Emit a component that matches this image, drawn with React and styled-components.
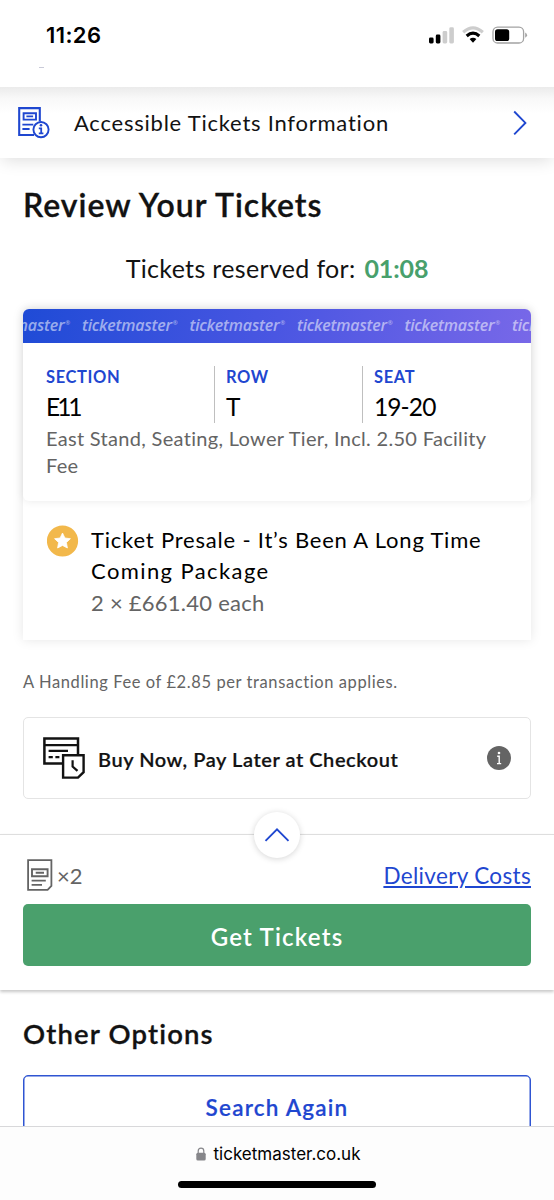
import React from 'react';
import styled, { createGlobalStyle } from 'styled-components';

const BRAND_COUNT = 6;

const App = () => {
  return (
    <>
      <GlobalStyle />
      <Screen>
        <StatusBar>
          <Time>11:26</Time>
          <StatusIcons />
          <Remnant />
        </StatusBar>

        <InfoLink>
          <TicketInfoIcon />
          <Text $size={22} $spacing={0.77}>
            Accessible Tickets Information
          </Text>
          <ChevronRight />
        </InfoLink>

        <Review>
          <Title>Review Your Tickets</Title>
          <Reserved>
            Tickets reserved for: <strong>01:08</strong>
          </Reserved>

          <Card>
            <Ticket>
              <Banner>
                {Array.from({ length: BRAND_COUNT }, (_, i) => (
                  <Brand key={i}>
                    ticketmaster<sup>®</sup>
                  </Brand>
                ))}
              </Banner>
              <TicketBody>
                <Seats>
                  <Seat>
                    <Label>SECTION</Label>
                    <Value $spacing={-3}>E11</Value>
                  </Seat>
                  <Seat $divided>
                    <Label>ROW</Label>
                    <Value>T</Value>
                  </Seat>
                  <Seat $divided>
                    <Label>SEAT</Label>
                    <Value $spacing={-0.9}>19-20</Value>
                  </Seat>
                </Seats>
                <Description>
                  East Stand, Seating, Lower Tier, Incl. 2.50 Facility
                  <br />
                  Fee
                </Description>
              </TicketBody>
            </Ticket>
            <Package>
              <StarIcon />
              <div>
                <PackageLine $spacing={0.8}>
                  Ticket Presale - It’s Been A Long Time
                </PackageLine>
                <PackageLine $spacing={1.4}>Coming Package</PackageLine>
                <PackageLine $spacing={0.25} $muted>
                  2 × £661.40 each
                </PackageLine>
              </div>
            </Package>
          </Card>

          <Handling>A Handling Fee of £2.85 per transaction applies.</Handling>

          <PayLater>
            <PayLaterIcon />
            <Text $size={20} $spacing={0.55} $weight={600}>
              Buy Now, Pay Later at Checkout
            </Text>
            <InfoDot />
          </PayLater>
        </Review>

        <Checkout>
          <Expand>
            <ChevronUp />
          </Expand>
          <Summary>
            <TicketIcon />
            <Text $size={22} $spacing={0} $color="#646464">
              ×2
            </Text>
            <DeliveryLink href="#delivery">Delivery Costs</DeliveryLink>
          </Summary>
          <BuyButton>Get Tickets</BuyButton>
        </Checkout>

        <Options>
          <h2>Other Options</h2>
          <SearchButton>Search Again</SearchButton>
        </Options>

        <BrowserBar>
          <Address>
            <LockIcon />
            ticketmaster.co.uk
          </Address>
          <HomeIndicator />
        </BrowserBar>
      </Screen>
    </>
  );
};

export default App;

const StatusIcons = () => (
  <svg width="100" height="20" viewBox="0 0 100 20">
    <rect x="1" y="11.5" width="4.6" height="6" rx="1.4" />
    <rect x="7.8" y="8.5" width="4.6" height="9" rx="1.4" />
    <rect x="14.6" y="5" width="4.6" height="12.5" rx="1.4" fill="#cdcdcd" />
    <rect x="21.3" y="1.3" width="4.6" height="16.2" rx="1.4" fill="#cdcdcd" />
    <path
      d="M35.2 6.3 Q45 -2.4 54.8 6.3"
      fill="none"
      stroke="#cdcdcd"
      strokeWidth="3.2"
    />
    <path d="M38.7 10 Q45 4.4 51.3 10" fill="none" stroke="#000" strokeWidth="3.2" />
    <path d="M41.6 13.1 Q45 10.3 48.4 13.1 L45 16.8 Z" />
    <rect
      x="65"
      y="1.2"
      width="30.6"
      height="15.8"
      rx="4.6"
      fill="none"
      stroke="#a3a3a3"
      strokeWidth="1.3"
    />
    <rect x="67" y="3.2" width="14.2" height="11.9" rx="2.6" />
    <path d="M97.2 6.6 Q101 9.1 97.2 11.8 Z" fill="#a3a3a3" />
  </svg>
);

const TicketInfoIcon = () => (
  <svg width="34" height="34" viewBox="0 0 34 34" fill="none" stroke="#1f47d0">
    <path d="M17 29 H2.2 V2.1 H22.8 V15.5" strokeWidth="2.1" />
    <path d="M6.6 7.2 H19 V13.6 H6.6 Z M9.4 10.4 H16.1" strokeWidth="1.9" />
    <path d="M5.4 18.6 H16.3 M5.4 23 H12.6" strokeWidth="1.8" />
    <circle cx="24" cy="23.6" r="7.6" strokeWidth="1.9" />
    <path d="M21.8 22.4 H24.2 V27.4 M21.8 27.4 H26.4" strokeWidth="1.8" />
    <circle cx="24" cy="19.3" r="1.3" fill="#1f47d0" stroke="none" />
  </svg>
);

const ChevronRight = () => (
  <svg width="14" height="26" viewBox="0 0 14 26" fill="none">
    <path d="M1.2 1.5 L12.4 12.9 L1.2 24.3" stroke="#1f47d0" strokeWidth="1.9" />
  </svg>
);

const ChevronUp = () => (
  <svg width="26" height="14" viewBox="0 0 26 14" fill="none">
    <path d="M1.5 12.8 L13 1.4 L24.5 12.8" stroke="#1f47d0" strokeWidth="1.9" />
  </svg>
);

const StarIcon = () => (
  <svg width="32" height="34" viewBox="0 0 32 34">
    <circle cx="15.5" cy="17" r="15.6" fill="#f2b84b" />
    <path
      d="M15.5 9 L17.9 14 L23.4 14.7 L19.4 18.5 L20.4 24 L15.5 21.4 L10.6 24 L11.6 18.5 L7.6 14.7 L13.1 14 Z"
      fill="#fff"
      stroke="#fff"
      strokeWidth="0.8"
      strokeLinejoin="round"
    />
  </svg>
);

const PayLaterIcon = () => (
  <svg width="42" height="42" viewBox="0 0 42 42" fill="none" stroke="#121212">
    <path d="M19 26.4 H1.4 V1.5 H35 V17.5" strokeWidth="2.5" />
    <path d="M1.4 8.1 H35" strokeWidth="2.4" />
    <path d="M5.6 13.9 H25 M5.6 20.1 H9.8 M12.4 20.1 H16.4" strokeWidth="2.4" />
    <path d="M20.1 18.3 H40.6 V35.2 L35 40.6 H20.1 Z" strokeWidth="2.4" />
    <path d="M29.6 23.3 V29.6 L34.5 33.9" strokeWidth="2.2" />
  </svg>
);

const InfoDot = () => (
  <svg width="24" height="24" viewBox="0 0 24 24">
    <circle cx="12" cy="12" r="12" fill="#646464" />
    <circle cx="12" cy="7" r="1.3" fill="#fff" />
    <path
      d="M10.2 10.3 H12.2 V17.6 M10 17.6 H14.2"
      fill="none"
      stroke="#fff"
      strokeWidth="1.4"
    />
  </svg>
);

const TicketIcon = () => (
  <svg width="26" height="32" viewBox="0 0 26 32" fill="none" stroke="#646464">
    <path d="M1.1 1.1 H24.4 V26.8 L20.6 30.9 H1.1 Z" strokeWidth="1.8" />
    <path d="M5 10.2 H20.6 V17.2 H5 Z M8.7 13.8 H17" strokeWidth="1.9" />
    <path d="M4.6 21.7 H18.8 M4.6 25.9 H15" strokeWidth="1.8" />
  </svg>
);

const LockIcon = () => (
  <svg width="10" height="14" viewBox="0 0 10 14">
    <rect x="0.3" y="5.7" width="9.4" height="7.8" rx="1.5" fill="#86868a" />
    <path
      d="M2.2 6.2 V4 Q2.2 1.2 5 1.2 Q7.8 1.2 7.8 4 V6.2"
      fill="none"
      stroke="#86868a"
      strokeWidth="1.2"
    />
  </svg>
);

const GlobalStyle = createGlobalStyle`
  * {
    box-sizing: border-box;
    margin: 0;
    padding: 0;
  }
  body {
    background-color: #fff;
    color: #121212;
    font-family: Lato, 'Open Sans', sans-serif;
  }
  svg {
    display: block;
    flex-shrink: 0;
  }
`;

const Screen = styled.div`
  display: flex;
  flex-direction: column;
  width: 554px;
  height: 1200px;
  overflow: hidden;
  background-color: #fff;
`;

const StatusBar = styled.header`
  display: grid;
  grid-template-columns: 1fr auto;
  grid-template-rows: 39px 1fr;
  align-content: start;
  height: 87px;
  padding: 26px 26px 0 46px;
  color: #000;
`;

const Time = styled.span`
  font: 600 22px/19px Inter, sans-serif;
  letter-spacing: 0.4px;
`;

const Remnant = styled.i`
  width: 5px;
  height: 1px;
  margin: 2px 0 0 -7px;
  background-color: #c9cad8;
`;

const Text = styled.span`
  color: ${({ $color }) => $color || 'inherit'};
  font-size: ${({ $size }) => $size}px;
  font-weight: ${({ $weight }) => $weight || 400};
  letter-spacing: ${({ $spacing }) => $spacing}px;
`;

const InfoLink = styled.section`
  display: flex;
  align-items: center;
  height: 71px;
  flex-shrink: 0;
  padding: 0 27px 0 17px;
  background: linear-gradient(#ebebeb, #f8f8f8 11px, #fff 26px);
  box-shadow: 0 4px 16px -2px rgba(0, 0, 0, 0.14);
  clip-path: inset(0 0 -30px 0);
  ${Text} {
    flex: 1;
    margin-left: 23px;
  }
`;

const Review = styled.main`
  display: flex;
  flex-direction: column;
  height: 676px;
  flex-shrink: 0;
  padding: 27px 23px 0;
`;

const Title = styled.h1`
  font-size: 32px;
  font-weight: 600;
  line-height: 40px;
  letter-spacing: 1px;
  -webkit-text-stroke: 0.3px;
`;

const Reserved = styled.p`
  margin: 27px 0 25px;
  font-size: 25px;
  line-height: 32px;
  letter-spacing: 0.34px;
  text-align: center;
  strong {
    margin-left: 2px;
    color: #48a06c;
    font-weight: 700;
    letter-spacing: -0.1px;
  }
`;

const Card = styled.article`
  border-radius: 6px 6px 0 0;
  box-shadow: 0 0 12px rgba(0, 0, 0, 0.1);
`;

const Ticket = styled.div`
  height: 192px;
  overflow: hidden;
  border-radius: 6px;
  box-shadow: 0 0 8px rgba(0, 0, 0, 0.09);
`;

const Banner = styled.div`
  display: flex;
  height: 34px;
  overflow: hidden;
  background: linear-gradient(100deg, #1f4bd6, #4a56e2 50%, #7868e8);
`;

const Brand = styled.span`
  width: 107.5px;
  flex-shrink: 0;
  color: rgba(255, 255, 255, 0.55);
  font: italic 600 16px/33px 'Open Sans', sans-serif;
  letter-spacing: -0.2px;
  &:first-child {
    margin-left: -48.6px;
  }
  sup {
    margin-left: 1px;
    font-size: 6px;
    line-height: 0;
  }
`;

const TicketBody = styled.div`
  padding: 23px;
`;

const Seats = styled.div`
  display: grid;
  grid-template-columns: 168px 148px 1fr;
  grid-template-rows: 57px;
`;

const Seat = styled.div`
  padding-left: ${({ $divided }) => ($divided ? '11px' : 0)};
  border-left: ${({ $divided }) => ($divided ? '1px solid #bfbfbf' : 0)};
`;

const Label = styled.p`
  color: #1f47d0;
  font-size: 16.5px;
  font-weight: 700;
  line-height: 23px;
  letter-spacing: 0.6px;
`;

const Value = styled.p`
  color: #000;
  font-size: 24.5px;
  line-height: 35px;
  letter-spacing: ${({ $spacing }) => $spacing || 0}px;
`;

const Description = styled.p`
  margin-top: 2px;
  color: #646464;
  font-size: 20px;
  line-height: 26.5px;
  letter-spacing: 0.31px;
  white-space: nowrap;
`;

const Package = styled.div`
  display: flex;
  gap: 12px;
  height: 139px;
  padding: 23px 24px 0;
`;

const PackageLine = styled.p`
  color: ${({ $muted }) => ($muted ? '#646464' : '#000')};
  font-size: 22px;
  line-height: 31.4px;
  letter-spacing: ${({ $spacing }) => $spacing}px;
  white-space: nowrap;
`;

const Handling = styled.p`
  margin: 32px 0 24px;
  color: #646464;
  font-size: 16.5px;
  line-height: 21px;
  letter-spacing: 0.59px;
`;

const PayLater = styled.section`
  display: flex;
  align-items: center;
  height: 82px;
  padding: 0 19px;
  border: 1px solid #e4e4e4;
  border-radius: 5px;
  ${Text} {
    flex: 1;
    margin-left: 13px;
    padding-top: 1px;
    -webkit-text-stroke: 0.2px;
  }
`;

const Checkout = styled.section`
  position: relative;
  height: 156px;
  flex-shrink: 0;
  padding: 24px 23px 0;
  border-top: 1px solid #dedede;
  box-shadow: 0 2px 3px rgba(0, 0, 0, 0.22);
`;

const Expand = styled.button`
  position: absolute;
  top: -23px;
  left: calc(50% - 23px);
  display: flex;
  align-items: center;
  justify-content: center;
  width: 46px;
  height: 46px;
  border: 0;
  border-radius: 50%;
  background-color: #fff;
  box-shadow: 0 1px 6px rgba(0, 0, 0, 0.17);
`;

const Summary = styled.div`
  display: flex;
  align-items: center;
  height: 32px;
  margin-bottom: 13px;
  padding-left: 4px;
  ${Text} {
    margin-left: 4px;
  }
`;

const DeliveryLink = styled.a`
  margin-left: auto;
  color: #1f47d0;
  font-size: 22.5px;
  letter-spacing: 0.34px;
`;

const BuyButton = styled.button`
  display: block;
  width: 100%;
  height: 62px;
  padding-top: 3px;
  border: 0;
  border-radius: 5px;
  background-color: #4aa06c;
  color: #fff;
  font: 600 24px/59px Lato, sans-serif;
  letter-spacing: 1.2px;
`;

const Options = styled.section`
  height: 136px;
  flex-shrink: 0;
  padding: 25px 23px 0;
  overflow: hidden;
  h2 {
    margin-bottom: 23px;
    font-size: 27.5px;
    font-weight: 600;
    line-height: 37px;
    letter-spacing: 1.15px;
    -webkit-text-stroke: 0.3px;
  }
`;

const SearchButton = styled.button`
  width: 100%;
  height: 62px;
  padding-top: 3px;
  border: 1px solid #2f55d2;
  border-radius: 5px;
  background-color: #fff;
  box-shadow: inset 0 0 0 0.5px #2f55d2;
  color: #1f47d0;
  font: 600 22.5px/57px Lato, sans-serif;
  letter-spacing: 1.2px;
  -webkit-text-stroke: 0.2px;
`;

const BrowserBar = styled.footer`
  display: flex;
  flex-direction: column;
  align-items: center;
  height: 74px;
  border-top: 1px solid #d8d8da;
  background-color: #fdfdfd;
`;

const Address = styled.div`
  display: flex;
  align-items: center;
  gap: 8px;
  height: 54px;
  padding-left: 2px;
  color: #000;
  font: 400 17px/54px Inter, sans-serif;
`;

const HomeIndicator = styled.i`
  width: 198px;
  height: 7px;
  border-radius: 4px;
  background-color: #000;
`;
